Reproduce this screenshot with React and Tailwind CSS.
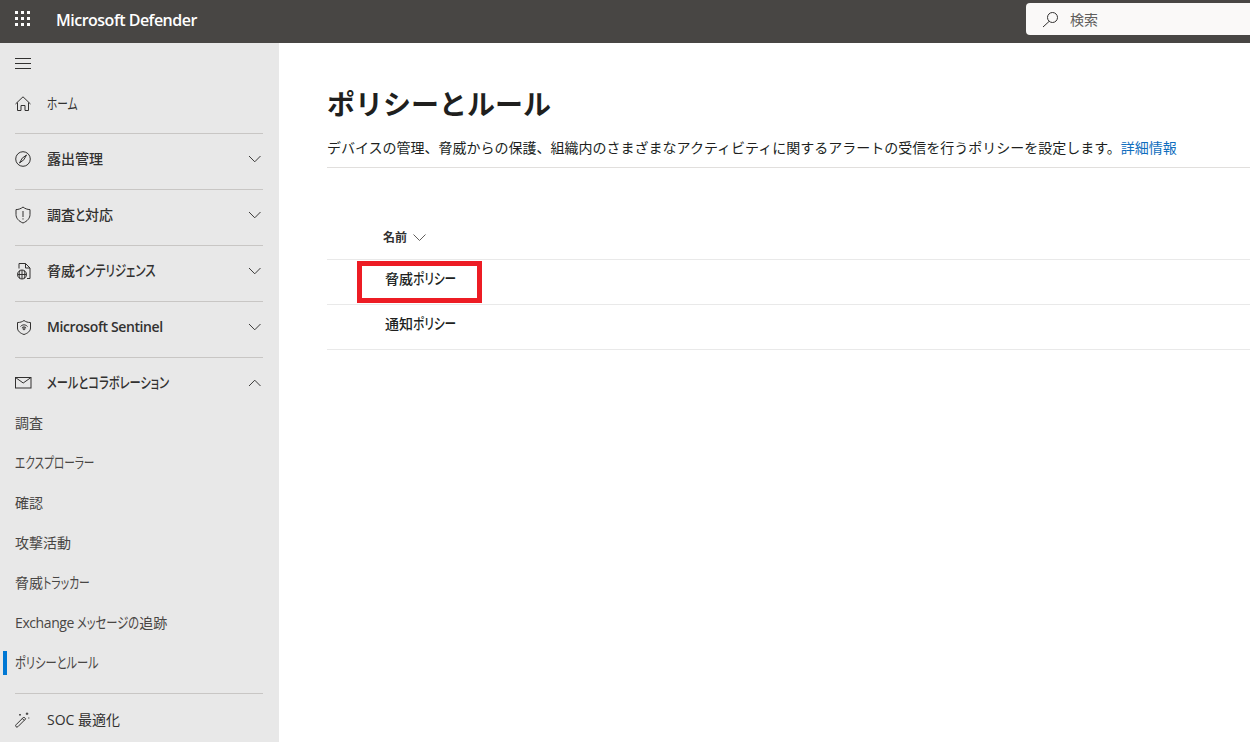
import React from "react";

// Narrow kana: the reference font sets kana much narrower than Noto Sans CJK.
const N = ({ w, s = "scale-x-[0.75]", children }) => (
  <span className={`inline-block ${w}`}>
    <span className={`inline-block whitespace-nowrap origin-left text-[15px] leading-[20px] ${s}`}>{children}</span>
  </span>
);

const Chevron = ({ up }) => (
  <svg width="13" height="8" viewBox="0 0 13 8" fill="none" stroke="#3b3a39" strokeWidth="1" className="shrink-0">
    {up ? <path d="M1 7 6.750 1.200 12.500 7" /> : <path d="M1 1l5.750 5.800L12.500 1" />}
  </svg>
);

const S = ({ children }) => (
  <svg width="18" height="18" viewBox="0 0 18 18" fill="none" stroke="#323130" strokeWidth="1" className="shrink-0">
    {children}
  </svg>
);

const IconHome = () => (
  <S><path d="M.5 9 8 1.800 15.500 9M2.500 7.500v8h3.500v-5h4v5h3.500v-8" /></S>
);
const IconCompass = () => (
  <S><circle cx="8" cy="9" r="7.300" /><path d="M11.500 5 8.800 9.800 4.500 13l2.700-4.800z" /></S>
);
const IconShield = () => (
  <S><path d="M8 1c2 1.700 4.400 2.500 7 2.600v4.900c0 3.600-2.600 6.700-7 8.500-4.400-1.800-7-4.900-7-8.500V3.600C3.600 3.500 6 2.700 8 1z" /><path d="M8 5v6M8 12.300v1.200" /></S>
);
const IconIntel = () => (
  <S>
    <path d="M4 6.500V1.500h6.500L15 6v10.500h-3M10.500 1.500V6H15" />
    <circle cx="7" cy="12.500" r="4.500" />
    <path d="M7 8v9M2.500 12.500h9M5 8.500c-1.200 2.500-1.200 5.500 0 8M9 8.500c1.200 2.500 1.200 5.500 0 8" />
  </S>
);
const IconSentinel = () => (
  <S>
    <path d="M9 2.500c1.800 1.300 3.700 2 6.500 2v5.500c0 3-2.600 5.200-6.500 6.500-3.900-1.300-6.500-3.500-6.500-6.500V4.500c2.800 0 4.700-.7 6.500-2z" />
    <path d="M5.500 8.500c1.900-2.200 5.100-2.200 7 0M6.900 9.800c1.200-1.200 3-1.200 4.200 0" />
    <circle cx="9" cy="10.800" r="1" />
  </S>
);
const IconMail = () => (
  <svg width="17" height="12" viewBox="0 0 17 12" fill="none" stroke="#323130" strokeWidth="1" className="shrink-0">
    <rect x=".5" y=".5" width="15.500" height="10.500" />
    <path d="M.5.500 8.200 6 16 .5" />
  </svg>
);
const IconWand = () => (
  <S>
    <path d="M1 13.800 8.800 6l1.900 1.900-7.800 7.800a1.300 1.300 0 0 1-1.900-1.900zM7.300 7.500l1.900 1.900" />
    <path d="M12 1.500v2.500M10.800 2.800h2.500M13.800 6.500v1M5 3v1.500M4.200 3.800h1.600" />
  </S>
);

const Divider = () => <div className="h-px bg-[#c8c6c4] ml-[15px] mr-[16px]" />;

const Group = ({ icon, label, up, weight = "font-medium" }) => (
  <div className="flex items-center h-[40px] pl-[15px] pr-[18px]">
    <span className="w-[32px] flex items-center shrink-0">{icon}</span>
    <span className={`flex-1 pb-[2px] text-[14px] text-[#323130] ${weight}`}>{label}</span>
    {up !== undefined && <Chevron up={up} />}
  </div>
);

const Sub = ({ children, active }) => (
  <div className="relative flex items-center h-[40px] pl-[15px] text-[14px] text-[#484644]">
    {active && <span className="absolute left-[3px] top-[8px] w-[4px] h-[24px] bg-[#0078d4]" />}
    <span className="pb-[2px]">{children}</span>
  </div>
);

const Section = ({ children }) => <div className="pt-[5px] pb-[10px]">{children}</div>;

export default function App() {
  return (
    <div className="h-[742px] w-[1250px] overflow-hidden flex flex-col bg-white [font-family:'Open_Sans','Noto_Sans_CJK_JP',sans-serif] [font-feature-settings:'palt']">
      <header className="h-[43px] bg-[#484644] flex items-center shrink-0">
        <div className="w-[15px] ml-[15px] mb-[6px] grid grid-cols-3 gap-x-[3px] gap-y-[3px]">
          {Array.from({ length: 9 }).map((_, i) => (
            <span key={i} className="w-[3px] h-[3px] bg-white" />
          ))}
        </div>
        <span className="ml-[26px] mb-[3px] text-[16px] tracking-[-0.5px] font-semibold text-white">Microsoft Defender</span>
        <div className="ml-auto w-[224px] h-[32px] mb-[5px] bg-[#faf9f8] rounded-l-[4px] flex items-center pl-[16px] gap-[11px]">
          <svg width="17" height="17" viewBox="0 0 17 17" fill="none" stroke="#323130" strokeWidth="1">
            <circle cx="10.500" cy="6.500" r="5" />
            <path d="M7 10.500 1 16" />
          </svg>
          <span className="text-[14px] text-[#605e5c]">検索</span>
        </div>
      </header>
      <div className="flex flex-1 min-h-0">
        <aside className="w-[279px] shrink-0 bg-[#e8e8e8] overflow-hidden">
          <div className="h-[40px] flex items-center pl-[15px]">
            <svg width="16" height="11" viewBox="0 0 16 11" stroke="#323130" strokeWidth="1">
              <path d="M0 .5h16M0 5.500h16M0 10.500h16" />
            </svg>
          </div>
          <div className="pt-[1px] pb-[9px]">
            <Group icon={<IconHome />} label={<N w="w-[31px]" s="scale-x-[0.71]">ホーム</N>} weight="font-normal" />
          </div>
          <Divider />
          <Section><Group icon={<IconCompass />} label="露出管理" up={false} /></Section>
          <Divider />
          <Section><Group icon={<IconShield />} label={<>調査<N w="w-[10px]">と</N>対応</>} up={false} /></Section>
          <Divider />
          <Section><Group icon={<IconIntel />} label={<>脅威<N w="w-[84px]" s="scale-x-[0.76]">インテリジェンス</N></>} up={false} /></Section>
          <Divider />
          <Section><Group icon={<IconSentinel />} label={<span className="tracking-[-0.4px]">Microsoft Sentinel</span>} up={false} weight="font-semibold" /></Section>
          <Divider />
          <div className="pt-[5px]">
            <Group icon={<IconMail />} label={<N w="w-[124px]" s="scale-x-[0.75]">メールとコラボレーション</N>} up />
            <Sub>調査</Sub>
            <Sub><N w="w-[80px]" s="scale-x-[0.71]">エクスプローラー</N></Sub>
            <Sub>確認</Sub>
            <Sub>攻撃活動</Sub>
            <Sub>脅威<N w="w-[48px]" s="scale-x-[0.72]">トラッカー</N></Sub>
            <Sub><span className="tracking-[-0.4px]">Exchange </span><N w="w-[62px]">メッセージの</N>追跡</Sub>
            <Sub active><N w="w-[84px]">ポリシーとルール</N></Sub>
          </div>
          <div className="pt-[10px]" />
          <Divider />
          <div className="pt-[6px]">
            <Group icon={<IconWand />} label={<>SOC 最適化</>} weight="font-normal" />
          </div>
        </aside>
        <main className="flex-1 pl-[48px] relative">
          <h1 className="mt-[41px] h-[40px] flex items-center text-[28px] font-bold text-[#201f1e] [font-feature-settings:normal]">ポリシーとルール</h1>
          <div className="mt-[11px] h-[24px] flex items-center text-[14px] text-[#201f1e] [font-feature-settings:normal] whitespace-nowrap">
            <span>デバイスの管理、脅威からの保護、組織内のさまざまなアクティビティに関するアラートの受信を行うポリシーを設定します。</span>
            <a className="text-[#106ebe]">詳細情報</a>
          </div>
          <div className="mt-[8px] h-px bg-[#e1dfdd]" />
          <div className="mt-[50px] h-[42px] flex items-center pl-[55px] gap-[6px] border-b border-[#e9e9e9] pb-[2px]">
            <span className="pl-[1px] text-[12px] font-semibold text-[#323130]">名前</span>
            <svg width="13" height="8" viewBox="0 0 13 8" fill="none" stroke="#605e5c" strokeWidth="1">
              <path d="M.5.500 6.500 6.500l6-6" />
            </svg>
          </div>
          <div className="relative h-[45px] flex items-start pt-[8px] pl-[58px] border-b border-[#e9e9e9] text-[14px] font-medium text-[#201f1e]">
            <span>脅威<N w="w-[42px]" s="scale-x-[0.78]">ポリシー</N></span>
            <span className="absolute left-[30px] top-[1px] w-[125px] h-[42px] border-[5px] border-[#ed1c24]" />
          </div>
          <div className="h-[45px] flex items-start pt-[8px] pl-[58px] border-b border-[#e9e9e9] text-[14px] font-medium text-[#201f1e]">
            <span>通知<N w="w-[42px]" s="scale-x-[0.78]">ポリシー</N></span>
          </div>
        </main>
      </div>
    </div>
  );
}
